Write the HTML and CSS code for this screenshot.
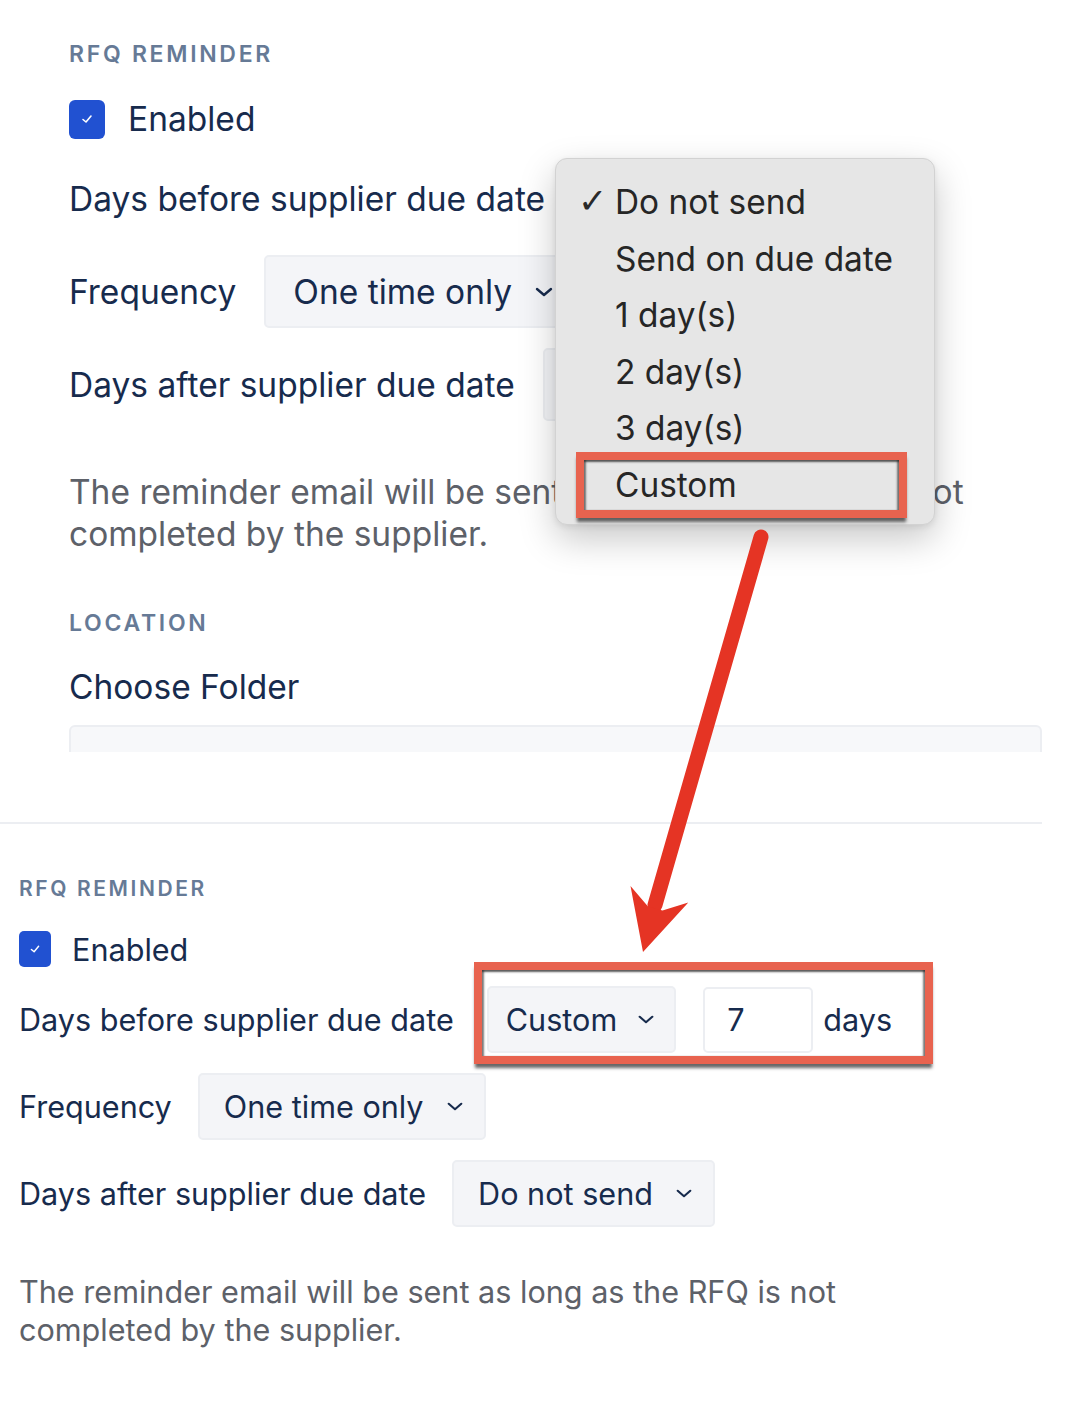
FILE: index.html
```html
<!DOCTYPE html>
<html lang="en">
<head>
<meta charset="utf-8">
<title>RFQ Reminder</title>
<link rel="stylesheet" href="styles.css">
</head>
<body>
<section class="shot shot-top">
  <h3 class="sec-title">RFQ REMINDER</h3>
  <div class="check-row">
    <span class="checkbox"><svg viewBox="0 0 20 20" width="20" height="20"><path d="M6 10.5 L9 13 L14 7" fill="none" stroke="#fff" stroke-width="1.6" stroke-linecap="round" stroke-linejoin="round"/></svg></span>
    <span>Enabled</span>
  </div>
  <div class="rows">
    <div class="row">
      <span class="label">Days before supplier due date</span>
      <div class="select sel-hidden" aria-label="Do not send"></div>
    </div>
    <div class="row">
      <span class="label">Frequency</span>
      <div class="select sel-freq"><span>One time only</span><svg class="chev" viewBox="0 0 20 12" width="20" height="12"><path d="M3 3 L10 9 L17 3" fill="none" stroke="#172b4d" stroke-width="2.4" stroke-linecap="round" stroke-linejoin="round"/></svg></div>
    </div>
    <div class="row">
      <span class="label">Days after supplier due date</span>
      <div class="select sel-hidden" aria-label="Do not send"></div>
    </div>
  </div>
  <p class="note">The reminder email will be sent as long as the RFQ is not<br>completed by the supplier.</p>
  <h3 class="sec-title loc">LOCATION</h3>
  <div class="folder-label">Choose Folder</div>
  <div class="folder-input"></div>

  <div class="menu">
    <div class="menu-item checked"><span class="tick">✓</span>Do not send</div>
    <div class="menu-item">Send on due date</div>
    <div class="menu-item">1 day(s)</div>
    <div class="menu-item">2 day(s)</div>
    <div class="menu-item">3 day(s)</div>
    <div class="menu-item">Custom</div>
    <div class="mark mark-menu"></div>
  </div>
</section>

<div class="divider"></div>

<section class="shot shot-bottom">
  <h3 class="sec-title">RFQ REMINDER</h3>
  <div class="check-row">
    <span class="checkbox"><svg viewBox="0 0 20 20" width="18" height="18"><path d="M6 10.5 L9 13 L14 7" fill="none" stroke="#fff" stroke-width="1.6" stroke-linecap="round" stroke-linejoin="round"/></svg></span>
    <span>Enabled</span>
  </div>
  <div class="rows">
    <div class="row">
      <span class="label">Days before supplier due date</span>
      <div class="controls">
        <div class="select sel-custom"><span>Custom</span><svg class="chev" viewBox="0 0 20 12" width="18" height="11"><path d="M3 3 L10 9 L17 3" fill="none" stroke="#172b4d" stroke-width="2.4" stroke-linecap="round" stroke-linejoin="round"/></svg></div>
        <div class="num-input">7</div>
        <span class="unit">days</span>
        <div class="mark mark-controls"></div>
      </div>
    </div>
    <div class="row">
      <span class="label">Frequency</span>
      <div class="select"><span>One time only</span><svg class="chev" viewBox="0 0 20 12" width="18" height="11"><path d="M3 3 L10 9 L17 3" fill="none" stroke="#172b4d" stroke-width="2.4" stroke-linecap="round" stroke-linejoin="round"/></svg></div>
    </div>
    <div class="row">
      <span class="label">Days after supplier due date</span>
      <div class="select"><span>Do not send</span><svg class="chev" viewBox="0 0 20 12" width="18" height="11"><path d="M3 3 L10 9 L17 3" fill="none" stroke="#172b4d" stroke-width="2.4" stroke-linecap="round" stroke-linejoin="round"/></svg></div>
    </div>
  </div>
  <p class="note">The reminder email will be sent as long as the RFQ is not<br>completed by the supplier.</p>
</section>

<svg class="arrow" viewBox="0 0 1086 1402" width="1086" height="1402" aria-hidden="true">
  <line x1="761" y1="537" x2="655" y2="905" stroke="#e53424" stroke-width="15" stroke-linecap="round"/>
  <polygon points="643,952 630.5,886 648,906.5 662.5,910.6 688.3,902.5" fill="#e53424"/>
</svg>
</body>
</html>
```

FILE: styles.css
```css
* { box-sizing: border-box; }

body {
  margin: 0;
  width: 1086px;
  height: 1402px;
  position: relative;
  overflow: hidden;
  background: #ffffff;
  font-family: Inter, "Noto Sans", sans-serif;
  color: #172b4d;
}

.shot { display: flex; flex-direction: column; align-items: flex-start; }

.sec-title {
  margin: 0;
  font-weight: 600;
  color: #667a96;
}

.check-row { display: flex; align-items: center; }

.checkbox {
  display: flex;
  align-items: center;
  justify-content: center;
  background: #2151d1;
  border-radius: 6px;
}

.rows { display: flex; flex-direction: column; }

.row { display: flex; align-items: center; }

.select {
  display: flex;
  align-items: center;
  background: #f4f5f8;
  border: 2px solid #eceef2;
  border-radius: 5px;
  white-space: nowrap;
}

.note { margin: 0; color: #5d6169; }

.mark {
  position: absolute;
  border: 8px solid #e8634f;
  box-shadow: 0 5px 3px -1px rgba(40, 40, 40, 0.7), inset 0 3px 2px -1px rgba(40, 40, 40, 0.75), inset 3px 0 2px -1px rgba(40, 40, 40, 0.6), inset -3px 0 2px -1px rgba(40, 40, 40, 0.6);
}

/* ---------- top screenshot ---------- */
.shot-top {
  position: relative;
  width: 1042px;
  height: 752px;
  overflow: hidden;
  padding: 40px 0 0 69px;
}

.shot-top .sec-title { font-size: 23px; line-height: 28px; letter-spacing: 2.7px; }

.shot-top .check-row {
  margin-top: 31px;
  height: 40px;
  gap: 23px;
  font-size: 33.5px;
}

.shot-top .checkbox { width: 36px; height: 39px; }

.shot-top .rows { margin-top: 23px; gap: 20px; }

.shot-top .row { height: 73px; gap: 28px; font-size: 33.5px; }

.shot-top .select { height: 73px; padding: 0 14px 0 27px; gap: 22px; }

.shot-top .sel-freq { width: 320px; }

.shot-top .sel-hidden { width: 260px; }

.shot-top .note { margin-top: 50px; font-size: 33.5px; line-height: 42px; }

.shot-top .loc { margin-top: 54px; }

.folder-label { margin-top: 30px; font-size: 33.5px; line-height: 40px; }

.folder-input {
  margin-top: 18px;
  width: 973px;
  height: 90px;
  flex-shrink: 0;
  background: #f7f8fa;
  border: 2px solid #eceef2;
  border-radius: 6px;
}

.menu {
  position: absolute;
  left: 555px;
  top: 158px;
  width: 380px;
  height: 367px;
  padding: 15px 0 0 0;
  background: #e6e6e6;
  border: 1px solid #d2d2d2;
  border-radius: 12px;
  box-shadow: 0 14px 36px rgba(0, 0, 0, 0.22), 0 2px 6px rgba(0, 0, 0, 0.08);
  font-size: 33.4px;
  color: #262626;
}

.menu-item {
  position: relative;
  height: 56.6px;
  line-height: 56.6px;
  padding-left: 59px;
  white-space: nowrap;
}

.tick {
  position: absolute;
  left: 22px;
  top: -1px;
  font-family: "DejaVu Sans", sans-serif;
  font-size: 35px;
  font-weight: 700;
  color: #2a2a2a;
}

.mark-menu { left: 20px; top: 293px; width: 331px; height: 66px; }

/* ---------- divider ---------- */
.divider {
  margin-top: 70px;
  width: 1042px;
  height: 2px;
  background: #eceef2;
}

/* ---------- bottom screenshot ---------- */
.shot-bottom { padding: 52px 0 0 19px; }

.shot-bottom .sec-title { font-size: 21px; line-height: 26px; letter-spacing: 2.6px; }

.shot-bottom .check-row {
  margin-top: 29px;
  height: 36px;
  gap: 21px;
  font-size: 30.6px;
}

.shot-bottom .checkbox { width: 32px; height: 36px; border-radius: 5px; }

.shot-bottom .rows { margin-top: 19px; gap: 20px; }

.shot-bottom .row { gap: 26px; font-size: 30.6px; }

.shot-bottom .select { height: 67px; padding: 0 20px 0 24px; gap: 22px; }

.shot-bottom .sel-custom { padding-left: 17px; padding-right: 19px; gap: 20px; }

.controls {
  position: relative;
  display: flex;
  align-items: center;
  margin-left: 7px;
}

.num-input {
  margin-left: 27px;
  width: 110px;
  height: 66px;
  padding-left: 22px;
  display: flex;
  align-items: center;
  background: #ffffff;
  border: 2px solid #eceef2;
  border-radius: 5px;
}

.unit { margin-left: 10px; }

.mark-controls { left: -13px; top: -24px; right: -41px; bottom: -11px; }

.shot-bottom .note { margin-top: 46px; font-size: 30.6px; line-height: 38px; }

/* ---------- annotation arrow ---------- */
.arrow {
  position: absolute;
  left: 0;
  top: 0;
  pointer-events: none;
}
```
